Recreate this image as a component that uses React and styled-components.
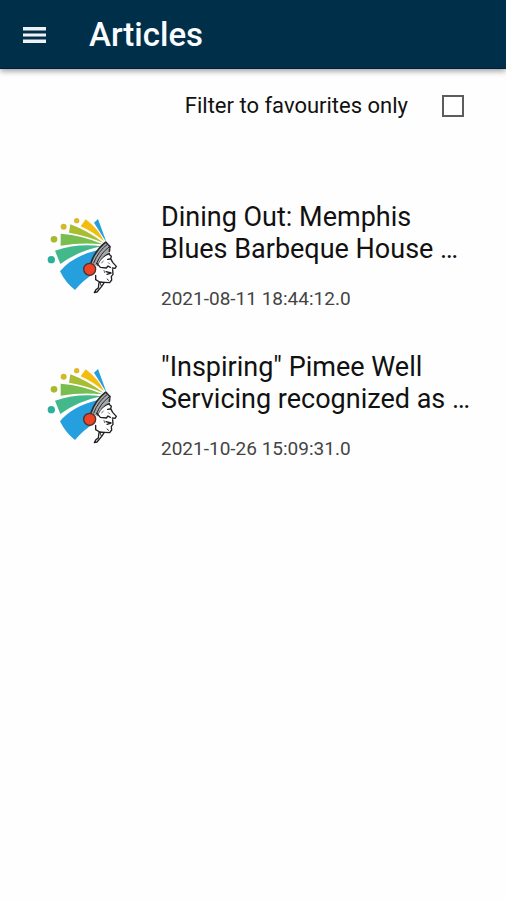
import React from "react";

import styled, { createGlobalStyle } from "styled-components";

const GlobalStyle = createGlobalStyle`
  * {
    box-sizing: border-box;
  }

  body {
    margin: 0;
    background: #fefefe;
    color: #111;
    font-family: Roboto, "Liberation Sans", sans-serif;
  }
`;

const Header = styled.header`
  display: flex;
  align-items: center;
  gap: 39px;
  height: 69px;
  padding: 2px 20px 0;
  background: #003049;
  border-bottom: 1px solid #001f3d;
  box-shadow: 0 2px 6px rgba(0, 0, 0, 0.4);
`;

const MenuButton = styled.button`
  display: flex;
  padding: 0;
  border: 0;
  background: none;
  color: #eef2f6;
  cursor: pointer;
`;

const PageTitle = styled.h1`
  margin: 0;
  color: #fafcff;
  font-size: 33px;
  font-weight: 500;
  line-height: 40px;
`;

const Filter = styled.label`
  display: flex;
  align-items: center;
  justify-content: flex-end;
  gap: 34px;
  padding: 24px 42px 0 24px;
  font-size: 22px;
  line-height: 26px;
  cursor: pointer;
`;

const Checkbox = styled.input`
  appearance: none;
  width: 22px;
  height: 22px;
  margin: 0;
  border: 2px solid #5c5c5c;
  background: #fff;

  &:checked {
    background: #003049;
  }
`;

const List = styled.ul`
  display: flex;
  flex-direction: column;
  gap: 40px;
  margin: 0;
  padding: 82px 24px 24px 40px;
  list-style: none;
`;

const Article = styled.li`
  display: flex;
  align-items: center;
  gap: 31px;
`;

const Details = styled.div`
  flex: 1;
  min-width: 0;
`;

const Headline = styled.h2`
  margin: 0 0 22px;
  font-size: 27px;
  font-weight: 400;
  line-height: 32px;
`;

const DateText = styled.time`
  display: block;
  color: #444;
  font-size: 19px;
  font-weight: 400;
  line-height: 24px;
`;

const LogoSvg = styled.svg`
  flex: none;
  width: 90px;
  height: 100px;
`;

const Logo = () => (
  <LogoSvg viewBox="0 0 270 300" role="img" aria-label="Headdress logo">
    {/* feathers */}
    <path d="M162 50L174 39L200 110Z" fill="#239fd9" />
    <path d="M122 61L137 40Q177 70 192 106Q157 76 122 61Z" fill="#f2bd10" />
    <path d="M87 80L91 55Q145 75 191 111Q140 89 87 80Z" fill="#a9bd32" />
    <path d="M62 119V83Q130 88 188 115Q125 108 62 119Z" fill="#78bd50" />
    <path d="M61 174L45 134Q115 111 185 121Q114 135 61 174Z" fill="#43b98b" />
    <path d="M60 196Q96 151 174 132L153 174L160 204Q129 223 105 252Q77 231 60 196Z" fill="#259fdd" />
    <circle cx="110" cy="44" r="8" fill="#e2b82a" />
    <circle cx="71" cy="62" r="9" fill="#d4b82b" />
    <circle cx="42" cy="100" r="10" fill="#a9b92c" />
    <circle cx="34" cy="161" r="11" fill="#2bb19b" />

    {/* headband */}
    <path d="M152 171Q166 132 195 109L209 122L205 147Q184 155 173 181Z" fill="#a5a7aa" />
    <g fill="none" stroke="#292a2d" strokeLinecap="round" strokeLinejoin="round">
      <path d="M153 170Q166 133 196 109" strokeWidth="5" />
      <path d="M161 171Q175 135 202 115M169 174Q183 140 206 124" strokeWidth="3" />
      <path d="M174 180Q184 153 208 142" strokeWidth="4" />
      <path d="M198 109L210 122L208 137" strokeWidth="5" strokeDasharray="8 4" />
    </g>

    {/* face */}
    <path d="M176 173Q187 150 209 146L213 158L229 180L219 188V209L211 230L189 229L166 220V194Z" fill="#fff" />
    <g fill="none" stroke="#202124" strokeLinecap="round" strokeLinejoin="round">
      <path d="M207 145L214 151L212 158L218 169L229 181L225 187L217 186" strokeWidth="4" />
      <path d="M218 191L219 205L214 211L215 222L209 230L194 229" strokeWidth="4" />
      <path d="M171 172L181 184L199 186L204 180L211 184" strokeWidth="4" />
      <path d="M198 197L213 201L201 205M203 160L211 159" strokeWidth="4" />
      <path d="M185 171L190 165M192 193L194 200M205 170L209 174" strokeWidth="2" />
      <path d="M167 208V221L179 228L193 229L185 241L171 258L163 260L168 251L175 246L177 229" strokeWidth="4" />
      <path d="M180 230L184 240M202 219L205 223" strokeWidth="3" />
    </g>
    <circle cx="149" cy="190" r="18" fill="#ed4424" stroke="#51312c" strokeWidth="4" />
  </LogoSvg>
);

const articles = [
  {
    id: 1,
    title: "Dining Out: Memphis Blues Barbeque House …",
    date: "2021-08-11 18:44:12.0",
  },
  {
    id: 2,
    title: "\"Inspiring\" Pimee Well Servicing recognized as …",
    date: "2021-10-26 15:09:31.0",
  },
];

const App = () => {
  return (
    <>
      <GlobalStyle />
      <Header>
        <MenuButton type="button" aria-label="Open menu">
          <svg width="30" height="30" viewBox="0 0 30 30" fill="currentColor">
            <path d="M3 7h23v3.5H3zM3 13.5h23v3H3zM3 19.5h23v3.5H3z" />
          </svg>
        </MenuButton>
        <PageTitle>Articles</PageTitle>
      </Header>
      <main>
        <Filter htmlFor="favourites">
          Filter to favourites only
          <Checkbox type="checkbox" id="favourites" />
        </Filter>
        <List>
          {articles.map(article => (
            <Article key={article.id}>
              <Logo />
              <Details>
                <Headline>{article.title}</Headline>
                <DateText>{article.date}</DateText>
              </Details>
            </Article>
          ))}
        </List>
      </main>
    </>
  );
};

export default App;
